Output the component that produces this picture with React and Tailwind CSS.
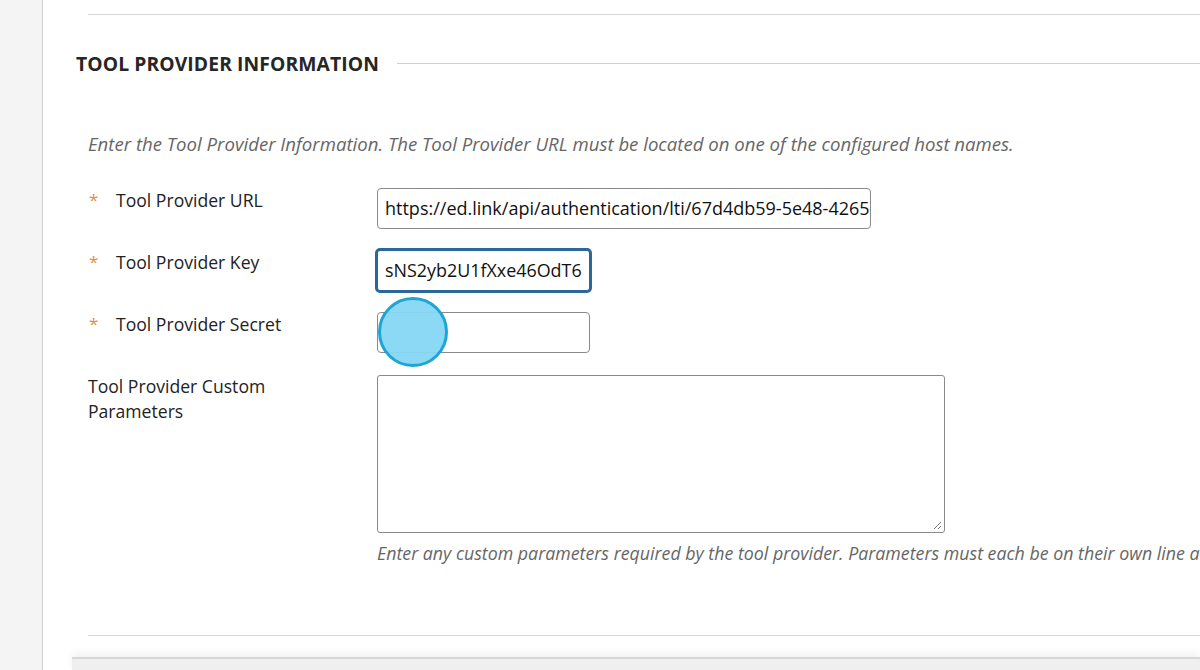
import React from "react";

const font = { fontFamily: '"Open Sans", "Noto Sans", sans-serif' };

function Star() {
  return <span className="w-[28px] shrink-0 pl-[1px] text-[17px] text-[#e0913a]">*</span>;
}

export default function App() {
  return (
    <div className="relative flex h-[670px] w-[1200px] overflow-hidden bg-white" style={font}>
      <div className="h-full w-[43px] shrink-0 border-r border-[#d0d0d0] bg-[#f4f4f4]" />
      <div className="relative flex min-w-0 flex-1 flex-col">
        <div className="ml-[45px] mt-[14px] h-[2px] bg-[#d4d4d4]" />
        <div className="ml-[33px] mt-[36px] flex items-center">
          <h2 className="shrink-0 text-[19.3px] font-bold uppercase leading-[26px] tracking-[0.1px] text-[#262626]">
            Tool Provider Information
          </h2>
          <div className="ml-[18px] h-[1px] flex-1 bg-[#cfcfcf]" />
        </div>
        <p className="ml-[45px] mt-[55px] whitespace-nowrap text-[18.6px] italic leading-[24px] text-[#666666]">
          Enter the Tool Provider Information. The Tool Provider URL must be located on one of the configured host names.
        </p>
        <div className="ml-[45px] mt-[32px] grid grid-cols-[289px_1fr] gap-y-[21px]">
          <div className="flex text-[17.6px] leading-[24px] text-[#222]">
            <Star />
            <span>Tool Provider URL</span>
          </div>
          <div className="flex h-[41px] w-[494px] items-center overflow-hidden whitespace-nowrap rounded-[4px] border border-[#8a8a8a] pl-[7px] text-[18px] text-[#111]">
            https://ed.link/api/authentication/lti/67d4db59-5e48-4265-a1f2
          </div>
          <div className="flex text-[17.6px] leading-[24px] text-[#222]">
            <Star />
            <span>Tool Provider Key</span>
          </div>
          <div className="-ml-[2px] -my-[2px] flex h-[45px] w-[217px] items-center overflow-hidden whitespace-nowrap rounded-[5px] border-[3px] border-[#2b6899] px-[7px] text-[17.9px] text-[#111]">
            sNS2yb2U1fXxe46OdT6
          </div>
          <div className="flex text-[17.6px] leading-[24px] text-[#222]">
            <Star />
            <span>Tool Provider Secret</span>
          </div>
          <div className="h-[41px] w-[213px] rounded-[4px] border border-[#8a8a8a]" />
          <div className="w-[220px] text-[17.6px] leading-[25px] text-[#222]">
            Tool Provider Custom Parameters
          </div>
          <div className="flex flex-col">
            <div className="relative mt-[1px] h-[158px] w-[568px] rounded-[3px] border border-[#8a8a8a]">
              <svg className="absolute bottom-[2px] right-[2px]" width="10" height="10" viewBox="0 0 10 10">
                <path d="M9 2 L2 9 M9 6 L6 9" stroke="#777" strokeWidth="1" />
              </svg>
            </div>
            <p className="mt-[8px] whitespace-nowrap text-[17.8px] italic leading-[24px] text-[#666666]">
              Enter any custom parameters required by the tool provider. Parameters must each be on their own line and be entered in name=value format.
            </p>
          </div>
        </div>
        <div className="ml-[45px] mt-[70px] h-[2px] bg-[#d8d8d8]" />
        <div className="ml-[29px] mt-[22px] h-[40px] border-t-2 border-[#d6d6d6] bg-[#efefef] shadow-[0_-4px_8px_rgba(0,0,0,0.06)]" />
      </div>
      <div className="absolute left-[378px] top-[297px] h-[70px] w-[70px] rounded-full border-[3px] border-[#1ea5d2] bg-[#86d7f5]/95" />
    </div>
  );
}
